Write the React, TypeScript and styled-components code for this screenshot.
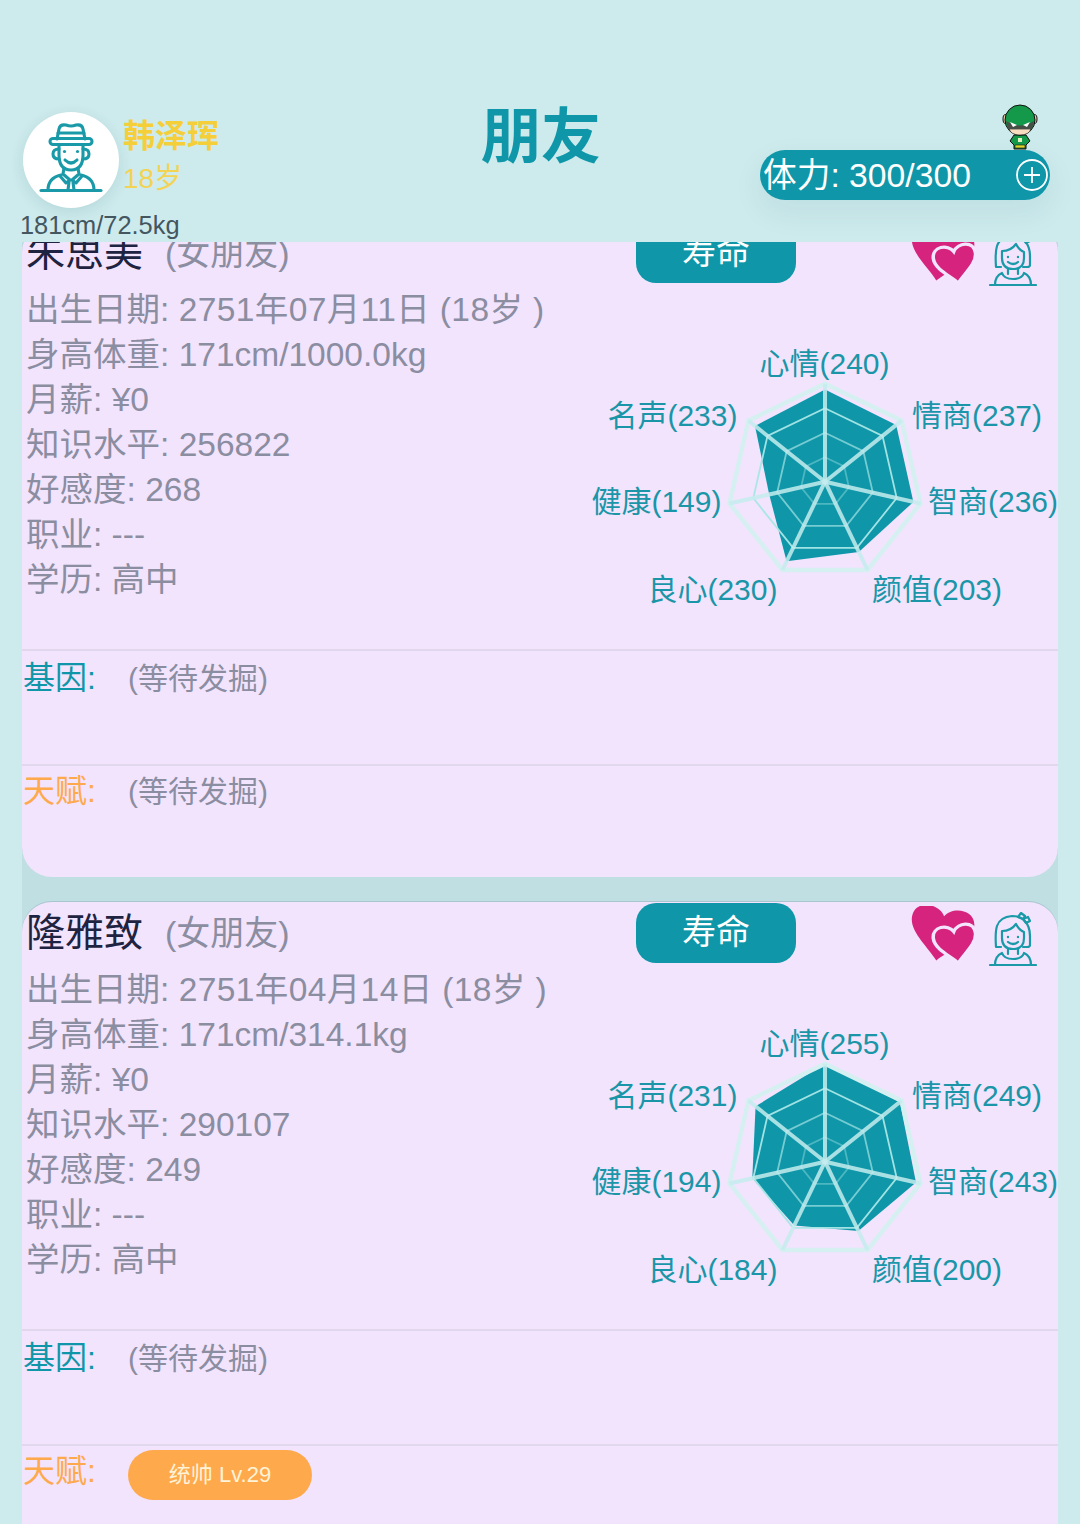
import React from "react";
import styled, { createGlobalStyle } from "styled-components";

const TEAL = "#0f97a9";
const GREY = "#8b8da1";

const GlobalStyle = createGlobalStyle`
  html, body {
    margin: 0;
    padding: 0;
    background: #cdeaec;
    font-family: "Liberation Sans", "Noto Sans CJK SC", sans-serif;
  }
  body {
    overflow: hidden;
  }
`;

type Friend = {
  name: string;
  birth: string;
  body: string;
  salary: string;
  knowledge: string;
  favor: string;
  stats: number[];
  talent?: string;
};

// stats go clockwise from the top: 心情 情商 智商 颜值 良心 健康 名声
const friends: Friend[] = [
  {
    name: "朱思美",
    birth: "2751年07月11日 (18岁 )",
    body: "171cm/1000.0kg",
    salary: "¥0",
    knowledge: "256822",
    favor: "268",
    stats: [240, 237, 236, 203, 230, 149, 233],
  },
  {
    name: "隆雅致",
    birth: "2751年04月14日 (18岁 )",
    body: "171cm/314.1kg",
    salary: "¥0",
    knowledge: "290107",
    favor: "249",
    stats: [255, 249, 243, 200, 184, 194, 231],
    talent: "统帅 Lv.29",
  },
];

const statLabels = [
  { name: "心情", x: 234.5, y: 23.5, anchor: "middle" },
  { name: "情商", x: 322, y: 75.5, anchor: "start" },
  { name: "智商", x: 338, y: 161.5, anchor: "start" },
  { name: "颜值", x: 282, y: 249.5, anchor: "start" },
  { name: "良心", x: 187.5, y: 249.5, anchor: "end" },
  { name: "健康", x: 131.5, y: 161.5, anchor: "end" },
  { name: "名声", x: 147.5, y: 75.5, anchor: "end" },
];

const CX = 235;
const CY = 141.7;
const RADIUS = 98;

const pointAt = (i: number, r: number) => {
  const a = -Math.PI / 2 + (i * 2 * Math.PI) / 7;
  return [CX + r * Math.cos(a), CY + r * Math.sin(a)];
};

const ring = (r: number) =>
  [0, 1, 2, 3, 4, 5, 6].map((i) => pointAt(i, r).map((n) => n.toFixed(1)).join(",")).join(" ");

const RadarChart: React.FC<{ stats: number[] }> = ({ stats }) => {
  const shape = stats
    .map((v, i) => pointAt(i, (v / 255) * RADIUS).map((n) => n.toFixed(1)).join(","))
    .join(" ");
  return (
    <RadarSvg viewBox="0 0 468 270" width="468" height="270">
      <polygon points={shape} fill={TEAL} />
      {[24.5, 49, 73.5].map((r, i) => (
        <polygon key={r} points={ring(r)} fill="none" stroke="#a8e6e6" strokeOpacity={0.4 + i * 0.28} strokeWidth="1.8" />
      ))}
      <polygon points={ring(RADIUS)} fill="none" stroke="#d6f0f2" strokeWidth="4.5" />
      {stats.map((_, i) => {
        const [x, y] = pointAt(i, RADIUS);
        return <line key={i} x1={CX} y1={CY} x2={x} y2={y} stroke="#c4ecee" strokeOpacity="0.85" strokeWidth="4" />;
      })}
      {statLabels.map((l, i) => (
        <StatText key={l.name} x={l.x} y={l.y} textAnchor={l.anchor as "start"} dominantBaseline="central">
          {l.name}({stats[i]})
        </StatText>
      ))}
    </RadarSvg>
  );
};

const ManIcon = () => (
  <svg viewBox="0 0 96 96" width="96" height="96" fill="none" stroke="#1a9aa8" strokeWidth="3.1" strokeLinecap="round" strokeLinejoin="round">
    <path d="M34 27 L36 17 Q37 12 43 13 Q48 15 53 13 Q59 12 60 17 L62 27" />
    <path d="M35 21 H61" />
    <rect x="27" y="26.5" width="42" height="6" rx="3" />
    <path d="M36 33 V43 Q36 58 48 58 Q60 58 60 43 V33" />
    <path d="M36 37 Q30 37 30 42 Q30 47 36 47 M60 37 Q66 37 66 42 Q66 47 60 47" />
    <circle cx="41.5" cy="39.5" r="1.6" fill="#1a9aa8" stroke="none" />
    <circle cx="54.5" cy="39.5" r="1.6" fill="#1a9aa8" stroke="none" />
    <path d="M42 48 Q48 54 54 48" />
    <path d="M41 56 L40 62 L47 68 L43 71 L37 64 M55 56 L56 62 L49 68 L53 71 L59 64" />
    <path d="M25 78 Q25 66 38 63 M71 78 Q71 66 58 63" />
    <path d="M46 70 L45 78 M50 70 L51 78" />
    <path d="M18 78.5 H78" />
  </svg>
);

const GirlIcon = () => (
  <svg viewBox="0 0 48 54" width="48" height="54" fill="none" stroke="#1a9aa8" strokeWidth="2.2" strokeLinecap="round" strokeLinejoin="round">
    <path d="M12 35 H7 Q6 20 8 14 Q11 5 23 4 Q31 4 35 8 Q41 14 41 24 V33 Q41 35 38 35 H34" />
    <path d="M13 19 Q22 19 27 12 Q30 18 35 20 V26 Q35 37 24 37 Q13 37 13 26 Z" />
    <circle cx="19" cy="25" r="1.2" fill="#1a9aa8" stroke="none" />
    <circle cx="29" cy="25" r="1.2" fill="#1a9aa8" stroke="none" />
    <path d="M19 30 Q24 34 29 30" />
    <path d="M29 5 L32 1 L36 4 L34 7 Z M34 7 L39 5 L41 9 L37 11 Z" />
    <path d="M6 53 Q6 44 13 41 Q15 47 24 47 Q33 47 35 41 Q42 44 42 53" />
    <path d="M19 37 V42 M29 37 V42" />
    <path d="M1 53 H47" />
  </svg>
);

const heartPath = "M0 -8 C -4 -16 -18 -16 -18 -4 C -18 6 -6 14 0 22 C 6 14 18 6 18 -4 C 18 -16 4 -16 0 -8 Z";

const HeartsIcon = () => (
  <svg viewBox="0 0 66 60" width="66" height="60">
    <path d={heartPath} fill="#d6247e" transform="translate(31 22) rotate(10) scale(1.75 1.5)" />
    <path d={heartPath} fill="#d6247e" stroke="#f3e5fd" strokeWidth="3" transform="translate(44 34) rotate(-8) scale(1.18 1.06)" />
  </svg>
);

const HeroIcon = () => (
  <svg viewBox="0 0 36 46" width="36" height="46" stroke="#111" strokeWidth="1">
    <ellipse cx="3.4" cy="15" rx="2.4" ry="4.5" fill="#e9c9a0" />
    <ellipse cx="32.6" cy="15" rx="2.4" ry="4.5" fill="#e9c9a0" />
    <path d="M12 31 H24 L28 37 L24 41 V45 H12 V41 L8 37 Z" fill="#14994a" />
    <path d="M13 41 H23 V44 H13 Z" fill="#d8d82c" strokeWidth="0.6" />
    <circle cx="18" cy="16" r="15" fill="#14994a" />
    <path d="M7 25 Q9 31 18 31 Q27 31 29 25 Z" fill="#f7dcc0" strokeWidth="0.6" />
    <path d="M4 17 Q18 26 32 17 L30 25 H6 Z" fill="#454f45" stroke="none" />
    <path d="M8 18 L15 21 L11 23 Z M28 18 L21 21 L25 23 Z" fill="#fff" stroke="none" />
    <rect x="16" y="34" width="4" height="4" fill="#dff2c0" stroke="none" />
  </svg>
);

const FriendCard: React.FC<{ friend: Friend }> = ({ friend }) => (
  <Card>
    <CardHead>
      <NameBlock>
        <FriendName>{friend.name}</FriendName>
        <Relation>(女朋友)</Relation>
      </NameBlock>
      <LifeButton>寿命</LifeButton>
      <HeartSlot>
        <HeartsIcon />
      </HeartSlot>
      <GirlSlot>
        <GirlIcon />
      </GirlSlot>
    </CardHead>
    <CardBody>
      <InfoColumn>
        <InfoRow>
          出生日期: <BirthValue>{friend.birth}</BirthValue>
        </InfoRow>
        <InfoRow>身高体重: {friend.body}</InfoRow>
        <InfoRow>月薪: {friend.salary}</InfoRow>
        <InfoRow>知识水平: {friend.knowledge}</InfoRow>
        <InfoRow>好感度: {friend.favor}</InfoRow>
        <InfoRow>职业: ---</InfoRow>
        <InfoRow>学历: 高中</InfoRow>
      </InfoColumn>
      <RadarChart stats={friend.stats} />
    </CardBody>
    <TraitSection $pad={4}>
      <TraitLabel $color={TEAL}>基因:</TraitLabel>
      <Pending>(等待发掘)</Pending>
    </TraitSection>
    <TraitSection $pad={2}>
      <TraitLabel $color="#ffa94d">天赋:</TraitLabel>
      {friend.talent ? <TalentPill>{friend.talent}</TalentPill> : <Pending>(等待发掘)</Pending>}
    </TraitSection>
  </Card>
);

export default function App() {
  return (
    <Page>
      <GlobalStyle />
      <Header>
        <Profile>
          <ProfileTop>
            <Avatar>
              <ManIcon />
            </Avatar>
            <ProfileText>
              <PlayerName>韩泽珲</PlayerName>
              <PlayerAge>18岁</PlayerAge>
            </ProfileText>
          </ProfileTop>
          <PlayerBody>181cm/72.5kg</PlayerBody>
        </Profile>
        <Title>朋友</Title>
        <Stamina>
          <HeroSlot>
            <HeroIcon />
          </HeroSlot>
          <StaminaText>体力: 300/300</StaminaText>
          <svg viewBox="0 0 32 32" width="32" height="32" fill="none" stroke="#fff" strokeWidth="1.8">
            <circle cx="16" cy="16" r="15" />
            <path d="M16 8 V24 M8 16 H24" />
          </svg>
        </Stamina>
      </Header>
      <ListViewport>
        <List>
          {friends.map((f) => (
            <FriendCard key={f.name} friend={f} />
          ))}
        </List>
      </ListViewport>
    </Page>
  );
}

const Page = styled.div`
  width: 1080px;
  height: 1524px;
  overflow: hidden;
  background: #cdeaec;
`;

const Header = styled.header`
  height: 242px;
  box-sizing: border-box;
  display: grid;
  grid-template-columns: 1fr auto 1fr;
  padding: 112px 30px 0 23px;
`;

const Profile = styled.div`
  display: flex;
  flex-direction: column;
`;

const ProfileTop = styled.div`
  display: flex;
  gap: 4px;
`;

const Avatar = styled.div`
  width: 96px;
  height: 96px;
  border-radius: 50%;
  background: #fff;
  box-shadow: 0 4px 14px rgba(40, 110, 120, 0.14);
`;

const ProfileText = styled.div`
  display: flex;
  flex-direction: column;
`;

const PlayerName = styled.div`
  margin-top: 3px;
  font-size: 32px;
  line-height: 42px;
  font-weight: 700;
  color: #f5cf3a;
`;

const PlayerAge = styled.div`
  font-size: 28px;
  line-height: 44px;
  color: #f3d354;
`;

const PlayerBody = styled.div`
  margin: 3px 0 0 -3px;
  font-size: 25.4px;
  line-height: 28px;
  color: #44565f;
`;

const Title = styled.h1`
  margin: -6px 0 0 9px;
  font-size: 60px;
  line-height: 64px;
  font-weight: 700;
  color: ${TEAL};
`;

const Stamina = styled.div`
  position: relative;
  justify-self: end;
  align-self: start;
  margin-top: 38px;
  width: 290px;
  height: 50px;
  box-sizing: border-box;
  padding: 0 2px 0 3px;
  display: flex;
  align-items: center;
  justify-content: space-between;
  border-radius: 25px;
  background: ${TEAL};
  box-shadow: 0 12px 30px rgba(20, 100, 110, 0.08);
`;

const HeroSlot = styled.div`
  position: absolute;
  left: 242px;
  top: -46px;
  line-height: 0;
`;

const StaminaText = styled.span`
  font-size: 33.7px;
  line-height: 50px;
  color: #fff;
  white-space: nowrap;
`;

const ListViewport = styled.div`
  height: 1282px;
  margin: 0 22px;
  overflow: hidden;
`;

const List = styled.div`
  margin-top: -20px;
  display: flex;
  flex-direction: column;
  gap: 25px;
  background: #c0dfe2;
`;

const Card = styled.article`
  height: 655px;
  flex: none;
  border-radius: 30px;
  background: #f2e4fd;
  box-shadow: 0 -1px 0 #a9c6d0;
  overflow: hidden;
`;

const CardHead = styled.div`
  height: 64px;
  display: flex;
  align-items: flex-start;
`;

const NameBlock = styled.div`
  width: 614px;
  box-sizing: border-box;
  padding: 3px 0 0 4px;
  display: flex;
  align-items: center;
  gap: 22px;
  height: 59px;
`;

const FriendName = styled.span`
  font-size: 39px;
  line-height: 50px;
  color: #1d2340;
`;

const Relation = styled.span`
  font-size: 34px;
  line-height: 50px;
  color: ${GREY};
`;

const LifeButton = styled.div`
  width: 160px;
  height: 60px;
  margin-top: 1px;
  border-radius: 20px;
  background: ${TEAL};
  color: #fff;
  font-size: 34px;
  line-height: 58px;
  text-align: center;
`;

const HeartSlot = styled.div`
  margin: 4px 0 0 115px;
  line-height: 0;
`;

const GirlSlot = styled.div`
  margin: 10px 0 0 12px;
  line-height: 0;
`;

const CardBody = styled.div`
  height: 363px;
  display: flex;
  justify-content: space-between;
`;

const InfoColumn = styled.div`
  padding: 2px 0 0 4px;
  display: flex;
  flex-direction: column;
`;

const InfoRow = styled.div`
  height: 45px;
  font-size: 33.5px;
  line-height: 44px;
  color: ${GREY};
  white-space: nowrap;
`;

const BirthValue = styled.span`
  letter-spacing: 0.4px;
`;

const RadarSvg = styled.svg`
  margin-top: 54px;
  flex: none;
`;

const StatText = styled.text`
  font-size: 30px;
  fill: #1a96a8;
`;

const TraitSection = styled.section<{ $pad: number }>`
  height: 115px;
  box-sizing: border-box;
  padding-top: ${(p) => p.$pad}px;
  border-top: 2px solid #e2d8ee;
  display: flex;
  align-items: flex-start;
`;

const TraitLabel = styled.span<{ $color: string }>`
  width: 106px;
  box-sizing: border-box;
  padding-left: 1px;
  font-size: 32px;
  line-height: 46px;
  color: ${(p) => p.$color};
`;

const Pending = styled.span`
  font-size: 30px;
  line-height: 48px;
  color: ${GREY};
`;

const TalentPill = styled.div`
  width: 184px;
  height: 50px;
  margin-top: 2px;
  border-radius: 25px;
  background: #ffa94d;
  color: #fff3d8;
  font-size: 22px;
  line-height: 50px;
  text-align: center;
`;
